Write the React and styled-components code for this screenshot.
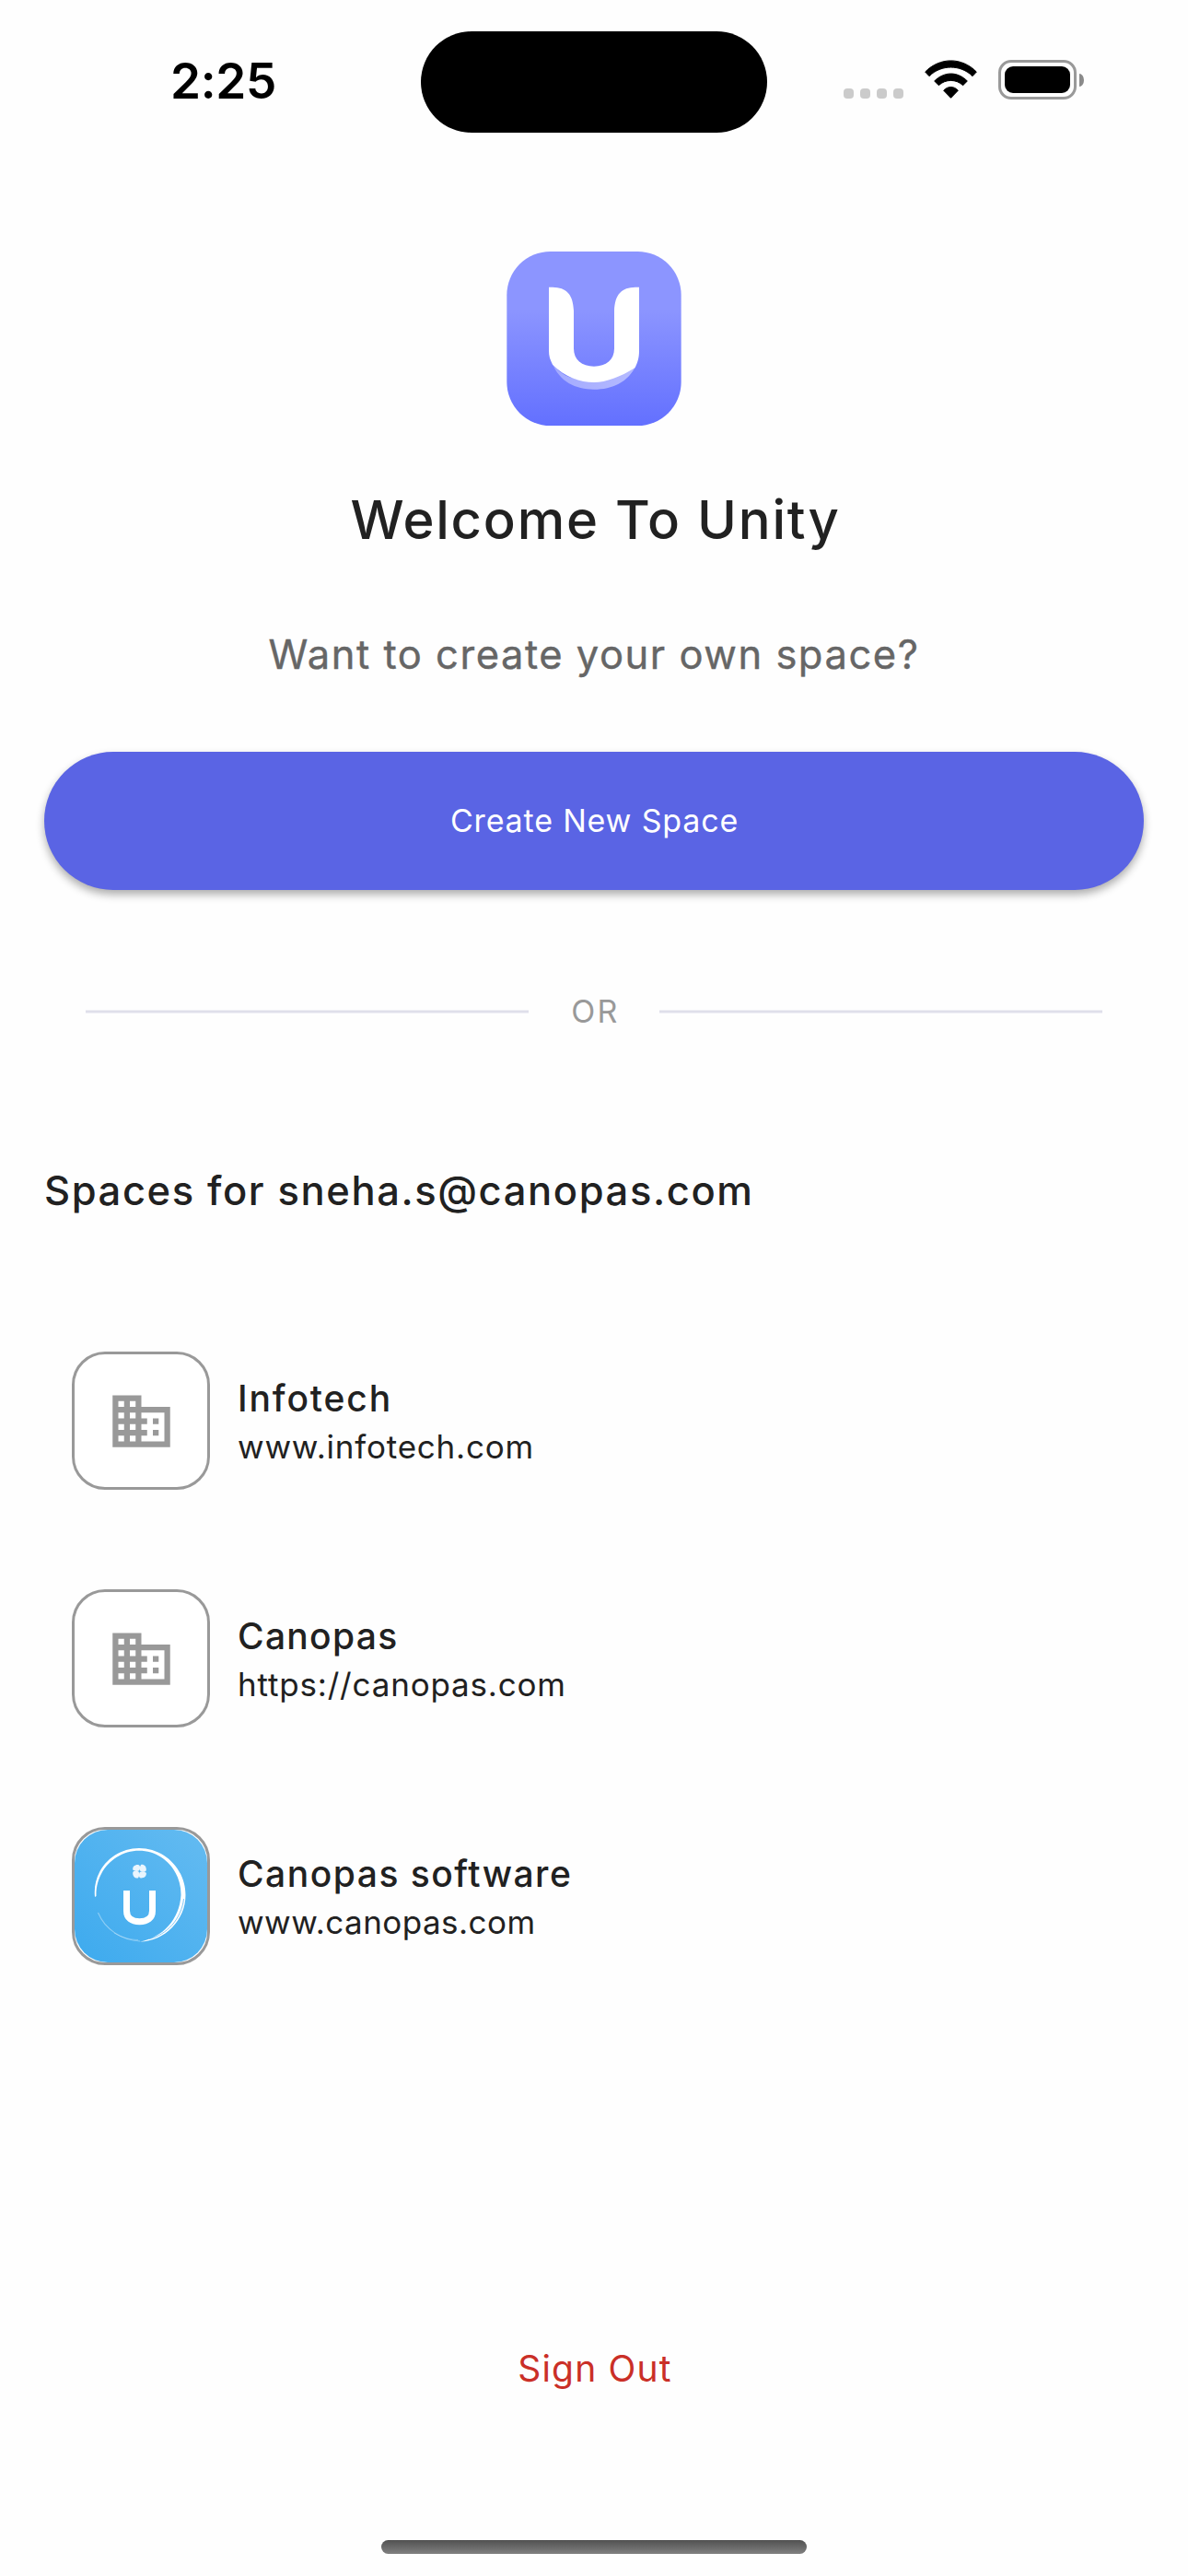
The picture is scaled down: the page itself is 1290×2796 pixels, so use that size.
import React from "react";
import styled, { createGlobalStyle } from "styled-components";

const GlobalStyle = createGlobalStyle`
  *, *::before, *::after { box-sizing: border-box; }
  body {
    margin: 0;
    background: #fefefe;
    color: #212121;
    font-family: Inter, "Liberation Sans", sans-serif;
  }
`;

const Screen = styled.div`
  display: flex;
  flex-direction: column;
  width: 1290px;
  height: 2796px;
  overflow: hidden;
`;

/* Status bar */
const StatusBar = styled.header`
  display: grid;
  grid-template-columns: 457px 376px 1fr;
  align-items: center;
  height: 178px;
`;

const Clock = styled.time`
  padding: 0 0 2px 185px;
  color: #000;
  font-size: 53px;
  font-weight: 600;
  line-height: 64px;
  letter-spacing: -0.3px;
`;

const Island = styled.div`
  height: 110px;
  border-radius: 55px;
  background: #000;
`;

const Indicators = styled.div`
  display: flex;
  align-items: center;
  height: 44px;
  padding-left: 83px;
  margin-top: -5px;
`;

const SignalDots = styled.div`
  display: flex;
  align-self: flex-end;
  gap: 7px;
  padding-bottom: 2px;
`;

const SignalDot = styled.span`
  width: 11px;
  height: 11px;
  border-radius: 4px;
  background: #cbcbcb;
`;

const WifiIcon = styled.svg`
  width: 57px;
  height: 42px;
  margin: 0 0 2px 23px;
`;

const Battery = styled.div`
  display: flex;
  width: 85px;
  height: 43px;
  margin-left: 23px;
  padding: 4px;
  border: 3px solid #999;
  border-radius: 14px;
`;

const BatteryLevel = styled.div`
  flex: 1;
  border-radius: 9px;
  background: #000;
`;

const BatteryCap = styled.div`
  width: 5px;
  height: 14px;
  margin-left: 3px;
  border-radius: 0 5px 5px 0 / 0 7px 7px 0;
  background: #8a8a8a;
`;

/* Content */
const Content = styled.main`
  display: flex;
  flex: 1;
  flex-direction: column;
  padding: 95px 48px 0;
`;

const AppLogo = styled.svg`
  align-self: center;
  width: 190px;
  height: 189px;
`;

const Title = styled.h1`
  margin: 66px 0 0;
  padding-left: 3px;
  font-size: 58px;
  font-weight: 500;
  line-height: 72px;
  letter-spacing: 1.76px;
  text-align: center;
`;

const Subtitle = styled.p`
  margin: 83px 0 0;
  color: #666;
  font-size: 43.5px;
  font-weight: 400;
  line-height: 54px;
  letter-spacing: 1.52px;
  text-align: center;
  -webkit-text-stroke: 0.4px #666;
`;

const PrimaryButton = styled.button`
  height: 150px;
  margin: 79px 0 0;
  padding: 0 0 2px 1px;
  border: 0;
  border-radius: 75px;
  background: #5a64e4;
  box-shadow: 0 5px 10px rgba(0, 0, 0, 0.32);
  color: #fff;
  font: 400 34px Inter, "Liberation Sans", sans-serif;
  letter-spacing: 0.82px;
`;

const OrDivider = styled.div`
  display: flex;
  align-items: center;
  margin-top: 110px;
  padding: 0 45px;
`;

const Rule = styled.span`
  flex: 1;
  height: 4px;
  border: solid #efeff5;
  border-width: 1px 0;
  background: #dfdfea;
`;

const OrLabel = styled.span`
  width: 142px;
  padding-left: 3px;
  color: #999;
  font-size: 34px;
  line-height: 44px;
  letter-spacing: 2.2px;
  text-align: center;
`;

const SectionTitle = styled.h2`
  margin: 145px 0 0;
  font-size: 43.5px;
  font-weight: 500;
  line-height: 54px;
  letter-spacing: 1.6px;
`;

const SpaceList = styled.ul`
  display: flex;
  flex-direction: column;
  gap: 108px;
  margin: 148px 0 0;
  padding: 0 30px;
  list-style: none;
`;

const SpaceItem = styled.li`
  display: flex;
  align-items: center;
  gap: 30px;
  height: 150px;
`;

const SpaceAvatar = styled.div`
  display: flex;
  align-items: center;
  justify-content: center;
  width: 150px;
  height: 150px;
  border: 3px solid #999;
  border-radius: 36px;
  background: #fff;
`;

const BuildingIcon = styled.svg`
  width: 75px;
  height: 75px;
  fill: #999;
`;

const SpaceLogo = styled.svg`
  width: 144px;
  height: 144px;
`;

const SpaceText = styled.div`
  padding-top: 4px;
`;

const SpaceName = styled.div`
  font-size: 39px;
  font-weight: 500;
  line-height: 52px;
  letter-spacing: ${({ $tracking }) => $tracking}px;
`;

const SpaceDomain = styled.div`
  font-size: 35px;
  line-height: 52px;
  letter-spacing: ${({ $tracking }) => $tracking}px;
`;

const SignOutButton = styled.button`
  align-self: center;
  margin-top: 413px;
  padding: 0 0 0 2px;
  border: 0;
  background: none;
  color: #ca2f27;
  font: 400 39px/50px Inter, "Liberation Sans", sans-serif;
  letter-spacing: 1.16px;
`;

const HomeIndicator = styled.div`
  align-self: center;
  width: 462px;
  height: 15px;
  margin-bottom: 24px;
  border-radius: 8px;
  background: linear-gradient(#515151, #808080);
`;

const spaces = [
  { name: "Infotech", domain: "www.infotech.com", nameTracking: 1.85, domainTracking: 0.78 },
  { name: "Canopas", domain: "https://canopas.com", nameTracking: 1.3, domainTracking: 0.82 },
  {
    name: "Canopas software",
    domain: "www.canopas.com",
    nameTracking: 1.5,
    domainTracking: 0.46,
    logo: true,
  },
];

function Wifi() {
  return (
    <WifiIcon viewBox="342 75 171 126">
      <g stroke="#000" strokeWidth="3" strokeLinejoin="round">
        <path d="M344 114C392 65.500 463 65.500 511 114L498 128C459 89.500 396 89.500 357 128Z" />
        <path d="M374 144C406 112 449 112 481 144L467 158C445 137 410 137 388 158Z" />
        <path d="M404 174.500C418 159.500 437 159.500 451 174.500L427.500 199Z" />
      </g>
    </WifiIcon>
  );
}

function UnityLogo() {
  return (
    <AppLogo viewBox="61 69 568 567">
      <defs>
        <linearGradient id="unityBg" x1="0" y1="0" x2="0" y2="1">
          <stop offset="0" stopColor="#8c95ff" />
          <stop offset="0.33" stopColor="#8c95ff" />
          <stop offset="1" stopColor="#6370ff" />
        </linearGradient>
        <linearGradient id="unityShade" x1="0" y1="0" x2="1" y2="0">
          <stop offset="0" stopColor="#a3aaff" />
          <stop offset="1" stopColor="#b5baff" />
        </linearGradient>
      </defs>
      <rect x="61" y="69" width="568" height="567" rx="142" fill="url(#unityBg)" />
      <path
        fill="url(#unityShade)"
        d="M208 430C240 485 300 490 345 490C395 490 440 470 482 440C456 494 405 518 345 518C285 518 232 494 208 430Z"
      />
      <path
        fill="#fff"
        d="M198 185H210C255 186 277 208 279 262V385C279 422 305 443 345 443C385 443 411 422 411 385V262C413 208 435 186 480 185H492V392C492 418 486 432 478 448C430 478 385 495 345 495C300 495 250 478 210 437C202 420 198 410 198 392Z"
      />
    </AppLogo>
  );
}

function CanopasLogo() {
  return (
    <SpaceLogo viewBox="3 3 144 144">
      <defs>
        <linearGradient id="canopasBg" x1="0" y1="1" x2="1" y2="0">
          <stop offset="0" stopColor="#3daaee" />
          <stop offset="1" stopColor="#64bbf1" />
        </linearGradient>
      </defs>
      <rect x="3" y="3" width="144" height="144" rx="36" fill="url(#canopasBg)" />
      <path
        fill="#fff"
        d="M25 76C22 47 45 23 73 23C101 23 123.500 46 123.500 74C123.500 101 101 124 74 124.500C99 120 117 100 118.500 74C119 48 99 25.800 73 25.800C47 25.800 25.500 48 26.500 75Z"
      />
      <path d="M121.500 78C119 100 103 117 84 121.500" fill="none" stroke="#4db0ef" strokeWidth="0.700" />
      <path
        d="M28.500 93C36 111 54 123 74 124"
        fill="none"
        stroke="#fff"
        strokeWidth="1.100"
        opacity="0.380"
      />
      <path d="M46 115C54 120 64 122.500 72 122.500" fill="none" stroke="#fff" strokeWidth="0.700" opacity="0.400" />
      <path
        d="M59.500 69V91C59.500 99 65 102.700 73.500 102.700C82 102.700 87.500 99 87.500 91V69"
        fill="none"
        stroke="#fff"
        strokeWidth="7"
      />
      <g fill="#eaf5fd">
        {[0, 90, 180, 270].map((angle) => (
          <path
            key={angle}
            d="M73.200 47.300C71.500 48.300 68.500 48.200 66.200 46.600C65.800 43 68 40.800 72 40.900C74.300 41.300 74.800 44.500 73.200 47.300Z"
            transform={`rotate(${angle} 73.500 48.200)`}
          />
        ))}
      </g>
    </SpaceLogo>
  );
}

function Building() {
  return (
    <BuildingIcon viewBox="0 0 24 24">
      <path d="M12 7V3H2v18h20V7H12zM6 19H4v-2h2v2zm0-4H4v-2h2v2zm0-4H4V9h2v2zm0-4H4V5h2v2zm4 12H8v-2h2v2zm0-4H8v-2h2v2zm0-4H8V9h2v2zm0-4H8V5h2v2zm10 12h-8v-2h2v-2h-2v-2h2v-2h-2V9h8v10zm-2-8h-2v2h2v-2zm0 4h-2v2h2v-2z" />
    </BuildingIcon>
  );
}

export default function App() {
  return (
    <>
      <GlobalStyle />
      <Screen>
        <StatusBar>
          <Clock>2:25</Clock>
          <Island />
          <Indicators>
            <SignalDots>
              <SignalDot />
              <SignalDot />
              <SignalDot />
              <SignalDot />
            </SignalDots>
            <Wifi />
            <Battery>
              <BatteryLevel />
            </Battery>
            <BatteryCap />
          </Indicators>
        </StatusBar>
        <Content>
          <UnityLogo />
          <Title>Welcome To Unity</Title>
          <Subtitle>Want to create your own space?</Subtitle>
          <PrimaryButton>Create New Space</PrimaryButton>
          <OrDivider>
            <Rule />
            <OrLabel>OR</OrLabel>
            <Rule />
          </OrDivider>
          <SectionTitle>Spaces for sneha.s@canopas.com</SectionTitle>
          <SpaceList>
            {spaces.map((space) => (
              <SpaceItem key={space.name}>
                <SpaceAvatar>{space.logo ? <CanopasLogo /> : <Building />}</SpaceAvatar>
                <SpaceText>
                  <SpaceName $tracking={space.nameTracking}>{space.name}</SpaceName>
                  <SpaceDomain $tracking={space.domainTracking}>{space.domain}</SpaceDomain>
                </SpaceText>
              </SpaceItem>
            ))}
          </SpaceList>
          <SignOutButton>Sign Out</SignOutButton>
        </Content>
        <HomeIndicator />
      </Screen>
    </>
  );
}
